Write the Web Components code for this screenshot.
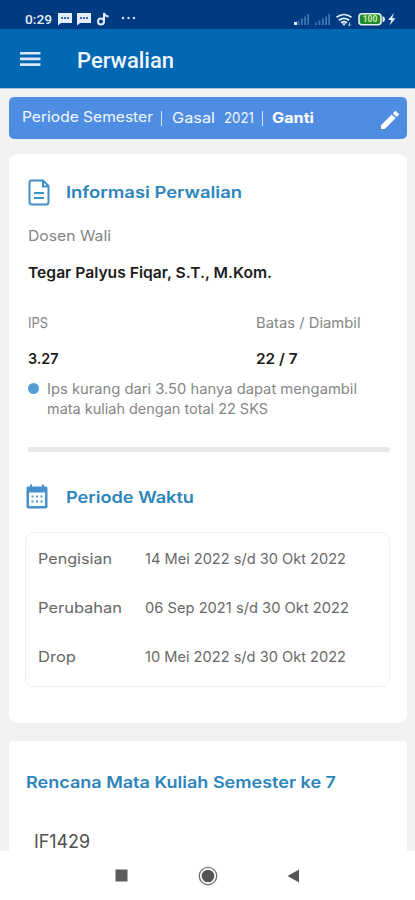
<!DOCTYPE html>
<html lang="id">
<head>
<meta charset="utf-8">
<meta name="viewport" content="width=device-width, initial-scale=1">
<title>Perwalian</title>
<style>
    html, body {
        margin: 0;
        height: 100%;
        overflow: hidden;
        background: #f2f2f3;
        font-family: Inter, "Open Sans", sans-serif;
    }
</style>
</head>
<body>
<perwalian-app></perwalian-app>

<script>
/*
class StatusBar
clock, notification glyphs and system indicators
*/
class StatusBar extends HTMLElement {
    constructor() {
        super();
        this.attachShadow({mode: 'open'}).innerHTML = `
            <style>
                :host {
                    display: flex;
                    box-sizing: border-box;
                    height: 29px;
                    padding: 9px 18px 0 25px;
                    background: #003b82;
                    color: #e4edfb;
                    font-family: Roboto, sans-serif;
                }
                .left, .right { display: flex; align-items: center; height: 20px; }
                .left { flex: 1; }
                svg { display: block; }
            </style>
            <div class="left">
                <ui-text size="13.5" weight="500" fit="27">0:29</ui-text>
                <svg width="62" height="14" viewBox="0 0 62 14" style="margin-left:6px" fill="#e4edfb">
                    <path d="M0 1h14v10H3l-3 2.500z"/>
                    <path d="M19 1h14v10H22l-3 2.500z"/>
                    <path d="M3 6h2m1 0h2m1 0h2M22 6h2m1 0h2m1 0h2" stroke="#3f699f" stroke-width="1.800"/>
                    <circle cx="43" cy="9.500" r="3" fill="none" stroke="#e4edfb" stroke-width="2"/>
                    <path d="M46 9.500V1c.5 2.200 2 3.300 4.500 3.500" fill="none" stroke="#e4edfb" stroke-width="2"/>
                </svg>
                <svg width="15" height="4" viewBox="0 0 15 4" style="margin-left:1px;margin-top:-2px" fill="#d3e0f4">
                    <circle cx="2" cy="2" r="1.200"/><circle cx="7.500" cy="2" r="1.200"/><circle cx="13" cy="2" r="1.200"/>
                </svg>
            </div>
            <div class="right">
                <svg width="104" height="16" viewBox="0 0 104 16">
                    <g fill="#4276b0">
                        <path d="M4.500 9.500h1.800v4.500H4.500zM8 7.500h1.800v6.500H8zM11.200 5.500H13v8.500h-1.800zM14.300 3h1.700v11h-1.700z"/>
                        <path d="M22 11.500h1.800v2.500H22zM25.500 9.500h1.800v4.500h-1.800zM29 7.500h1.800v6.500H29zM32.200 5.500H34v8.500h-1.800zM35.300 3H37v11h-1.700z"/>
                    </g>
                    <path d="M1 11h3v3H1z" fill="#e4edfb"/>
                    <g fill="none" stroke="#e4edfb" stroke-width="1.700">
                        <path d="M43.500 6.300q7.500-5.600 15 0M45.800 9.200q5.200-3.800 10.400 0M48 11.700q3-2.100 6 0"/>
                    </g>
                    <path d="M49 12.200h4L51 15z" fill="#e4edfb"/>
                    <path d="M56.500 11.500v3.500m-1.500-1.500l1.500 1.500 1.500-1.500" stroke="#a9c4e6" fill="none"/>
                    <rect x="66" y="2.800" width="22" height="11" rx="3" fill="#218c2c" stroke="#e8f0f8" stroke-width="1.600"/>
                    <path d="M89.500 5q2.500 1 2.500 3.300t-2.500 3.300z" fill="#e4edfb"/>
                    <text x="77" y="11.300" text-anchor="middle" font-family="Roboto, sans-serif" font-size="8.500" font-weight="700" fill="#d5efb5">100</text>
                    <path d="M101 2l-6 7h3.300l-1.800 5.500 6-7.300h-3.300z" fill="#e4edfb"/>
                </svg>
            </div>
        `;
    }
}

/*
class AppBar
menu button and page title, title goes in the slot
*/
class AppBar extends HTMLElement {
    constructor() {
        super();
        this.attachShadow({mode: 'open'}).innerHTML = `
            <style>
                :host {
                    display: flex;
                    align-items: center;
                    box-sizing: border-box;
                    height: 60px;
                    padding: 4px 20px 0;
                    border-bottom: 1px solid #a9c4e2;
                    background: #0067b3;
                    color: #eef5fd;
                    font-family: Roboto, sans-serif;
                }
                svg { display: block; margin-right: 36px; margin-top: -4px; }
            </style>
            <svg width="21" height="16" viewBox="0 0 21 16" fill="#dbe8f8">
                <path d="M0 1h20.500v2.600H0zM0 6.600h20.500v2.600H0zM0 12.300h20.500v2.600H0z"/>
            </svg>
            <slot></slot>
        `;
    }
}

/*
class PeriodBar
selected semester with the change link
*/
class PeriodBar extends HTMLElement {
    constructor() {
        super();
        this.attachShadow({mode: 'open'}).innerHTML = `
            <style>
                :host {
                    display: flex;
                    align-items: center;
                    box-sizing: border-box;
                    height: 42px;
                    margin: 8px 8px 0 9px;
                    padding: 0 7px 0 13px;
                    border-radius: 5px;
                    background: #4f8de2;
                    color: #f2f7ff;
                }
                i { width: 1px; height: 15px; background: #dbe8fb; }
                .pen { margin: 4px 0 0 auto; display: block; }
            </style>
            <ui-text size="14.5" fit="131" style="margin-top:-2px">Periode Semester</ui-text>
            <i style="margin-left:8px"></i>
            <ui-text size="14.5" fit="43" style="margin-left:10px">Gasal</ui-text>
            <ui-text size="14.5" fit="30" style="margin-left:9px">2021</ui-text>
            <i style="margin-left:8px"></i>
            <ui-text size="14.5" weight="700" fit="42" style="margin-left:9px;color:#fff">Ganti</ui-text>
            <svg class="pen" width="20" height="20" viewBox="0 0 20 20" fill="#fff">
                <path d="M1 15.200V19h3.800L15.500 8.300l-3.800-3.800zM18.600 5.200c.5-.5.500-1.100 0-1.500l-2.300-2.300c-.4-.5-1-.5-1.500 0L12.900 3.300l3.800 3.800z"/>
            </svg>
        `;
    }
}

/*
class UiCard
white rounded surface
*/
class UiCard extends HTMLElement {
    constructor() {
        super();
        this.attachShadow({mode: 'open'}).innerHTML = `
            <style>
                :host {
                    display: block;
                    box-sizing: border-box;
                    margin: 0 8px 0 9px;
                    border-radius: 9px;
                    background: #fff;
                }
            </style>
            <slot></slot>
        `;
    }
}

/*
class SectionHead
icon slot followed by a blue title
*/
class SectionHead extends HTMLElement {
    constructor() {
        super();
        this.attachShadow({mode: 'open'}).innerHTML = `
            <style>
                :host {
                    display: flex;
                    height: 28px;
                    color: #2c84bd;
                }
                .icon { width: 37.500px; }
                .title { padding-top: 4px; }
            </style>
            <div class="icon"><slot name="icon"></slot></div>
            <div class="title"><slot></slot></div>
        `;
    }
}

/*
class AdvisorInfo
lecturer, IPS and credit limit
*/
class AdvisorInfo extends HTMLElement {
    constructor() {
        super();
        this.attachShadow({mode: 'open'}).innerHTML = `
            <style>
                :host { display: block; padding-top: 20px; color: #858585; }
                strong { display: block; font-weight: inherit; color: #1c1c1c; margin-top: 16.5px; }
                .grid { display: grid; grid-template-columns: 228px 1fr; margin-top: 30px; }
                .note { display: flex; margin-top: 10px; }
                .dot { width: 11px; height: 11px; margin: 4px 8px 0 0; border-radius: 50%; background: #579dd4; }
                hr { height: 5px; margin: 28px -2px 0 0; border: 0; border-radius: 2px; background: #e8e8e8; }
            </style>
            <ui-text size="14.5" fit="83">Dosen Wali</ui-text>
            <strong><ui-text size="15" weight="600" fit="244">Tegar Palyus Fiqar, S.T., M.Kom.</ui-text></strong>
            <div class="grid">
                <div>
                    <ui-text size="14" fit="20">IPS</ui-text>
                    <strong><ui-text size="15" weight="600" fit="30.5">3.27</ui-text></strong>
                </div>
                <div>
                    <ui-text size="14" fit="104.5">Batas / Diambil</ui-text>
                    <strong><ui-text size="15" weight="600" fit="41.5">22 / 7</ui-text></strong>
                </div>
            </div>
            <div class="note">
                <div class="dot"></div>
                <div>
                    <ui-text size="14" fit="310">Ips kurang dari 3.50 hanya dapat mengambil</ui-text>
                    <ui-text size="14" fit="221">mata kuliah dengan total 22 SKS</ui-text>
                </div>
            </div>
            <hr>
        `;
    }
}

/*
class PeriodTable
outlined list of date ranges
*/
class PeriodTable extends HTMLElement {
    constructor() {
        super();
        this.attachShadow({mode: 'open'}).innerHTML = `
            <style>
                :host {
                    display: grid;
                    grid-template-columns: 107px 1fr;
                    grid-auto-rows: 20px;
                    row-gap: 28.700px;
                    box-sizing: border-box;
                    height: 155px;
                    margin: 21px -2px 0 -3px;
                    padding: 16.400px 0 0 12px;
                    border: 1px solid #efefef;
                    border-radius: 9px;
                    color: #686868;
                }
            </style>
            <slot></slot>
        `;
    }
}

/*
class NavBar
system buttons at the bottom
*/
class NavBar extends HTMLElement {
    constructor() {
        super();
        this.attachShadow({mode: 'open'}).innerHTML = `
            <style>
                :host {
                    display: flex;
                    justify-content: space-between;
                    align-items: center;
                    box-sizing: border-box;
                    flex: none;
                    height: 49px;
                    padding: 0 115px 0 115px;
                    background: #fff;
                }
            </style>
            <svg width="13" height="13" viewBox="0 0 13 13"><rect x=".5" y=".5" width="12" height="12" fill="#5c5c5c"/></svg>
            <svg width="20" height="20" viewBox="0 0 20 20">
                <circle cx="10" cy="10" r="8.700" fill="none" stroke="#707070" stroke-width="1.300"/>
                <circle cx="10" cy="10" r="6.300" fill="#555"/>
            </svg>
            <svg width="13" height="14" viewBox="0 0 13 14"><path d="M.5 7L12 .5v13z" fill="#555"/></svg>
        `;
    }
}

/*
class PerwalianApp
the whole screen
*/
class PerwalianApp extends HTMLElement {
    constructor() {
        super();
        this.attachShadow({mode: 'open'}).innerHTML = `
            <style>
                :host { display: flex; flex-direction: column; height: 100vh; }
                main { flex: 1; min-height: 0; overflow: hidden; }
                .info { height: 569px; margin-top: 15px; padding: 24px 19px 0; }
                .plan { height: 140px; margin-top: 18px; padding: 31px 17px 0; border-radius: 4px; }
                .plan ui-text { color: #2c84bd; }
                .plan .code { margin: 38.500px 0 0 8px; color: #505050; }
                svg { display: block; }
            </style>
            <status-bar></status-bar>
            <app-bar><ui-text size="21.5" weight="500" fit="97">Perwalian</ui-text></app-bar>
            <main>
                <period-bar></period-bar>
                <ui-card class="info">
                    <section-head>
                        <svg slot="icon" width="22" height="28" viewBox="0 0 22 28" fill="none" stroke="#3f91c6" stroke-width="2">
                            <path d="M3.500 2.500H15l5.500 5.500v16q0 2.500-2.500 2.500H4Q1.500 26.500 1.500 24V4.500q0-2 2-2z"/>
                            <path d="M15 3v5.500h5M6 15h10M6 20h10"/>
                        </svg>
                        <ui-text size="16" weight="600" fit="176">Informasi Perwalian</ui-text>
                    </section-head>
                    <advisor-info></advisor-info>
                    <section-head style="margin-top:31px">
                        <svg slot="icon" width="22" height="25" viewBox="0 0 22 25" style="margin-left:-2px;margin-top:1px">
                            <path d="M2 2.500h18q1.500 0 1.500 1.500v18.500q0 2-2 2h-17q-2 0-2-2V4q0-1.500 1.500-1.500z" fill="#4690cb"/>
                            <path d="M3 8.500h16v13.500H3z" fill="#fff"/>
                            <path d="M5 .5v4M17 .5v4" stroke="#4690cb" stroke-width="2"/>
                            <path d="M5.500 12.500h2m2.500 0h2m2.500 0h2M5.500 17.500h2m2.500 0h2m2.500 0h2" stroke="#559bd0" stroke-width="2"/>
                        </svg>
                        <ui-text size="16" weight="600" fit="128">Periode Waktu</ui-text>
                    </section-head>
                    <period-table>
                        <ui-text size="14.5" fit="74">Pengisian</ui-text>
                        <ui-text size="14.5" fit="201">14 Mei 2022 s/d 30 Okt 2022</ui-text>
                        <ui-text size="14.5" fit="84">Perubahan</ui-text>
                        <ui-text size="14.5" fit="204">06 Sep 2021 s/d 30 Okt 2022</ui-text>
                        <ui-text size="14.5" fit="38">Drop</ui-text>
                        <ui-text size="14.5" fit="201">10 Mei 2022 s/d 30 Okt 2022</ui-text>
                    </period-table>
                </ui-card>
                <ui-card class="plan">
                    <ui-text size="16" weight="600" fit="310">Rencana Mata Kuliah Semester ke 7</ui-text>
                    <ui-text class="code" size="18.5" fit="56">IF1429</ui-text>
                </ui-card>
            </main>
            <nav-bar></nav-bar>
        `;
    }
}

/*
class UiText
one line of text, stretched so that it fills the width given in 'fit'
*/
class UiText extends HTMLElement {
    constructor() {
        super();
        this.attachShadow({mode: 'open'}).innerHTML = `
            <style>
                :host { display: block; line-height: 20px; white-space: nowrap; }
                span { display: inline-block; vertical-align: top; transform-origin: 0 0; }
            </style>
            <span><slot></slot></span>
        `;
    }

    connectedCallback() {
        const span = this.shadowRoot.querySelector('span');
        const fit = Number(this.getAttribute('fit'));
        span.style.fontSize = this.getAttribute('size') + 'px';
        span.style.fontWeight = this.getAttribute('weight') || 400;
        span.style.transform = 'scaleX(' + fit / span.getBoundingClientRect().width + ')';
        this.style.width = fit + 'px';
    }
}

window.customElements.define('status-bar', StatusBar);
window.customElements.define('app-bar', AppBar);
window.customElements.define('period-bar', PeriodBar);
window.customElements.define('ui-card', UiCard);
window.customElements.define('section-head', SectionHead);
window.customElements.define('advisor-info', AdvisorInfo);
window.customElements.define('period-table', PeriodTable);
window.customElements.define('nav-bar', NavBar);
window.customElements.define('perwalian-app', PerwalianApp);
//last, the text is measured when everything round it is in place
window.customElements.define('ui-text', UiText);
</script>
</body>
</html>
